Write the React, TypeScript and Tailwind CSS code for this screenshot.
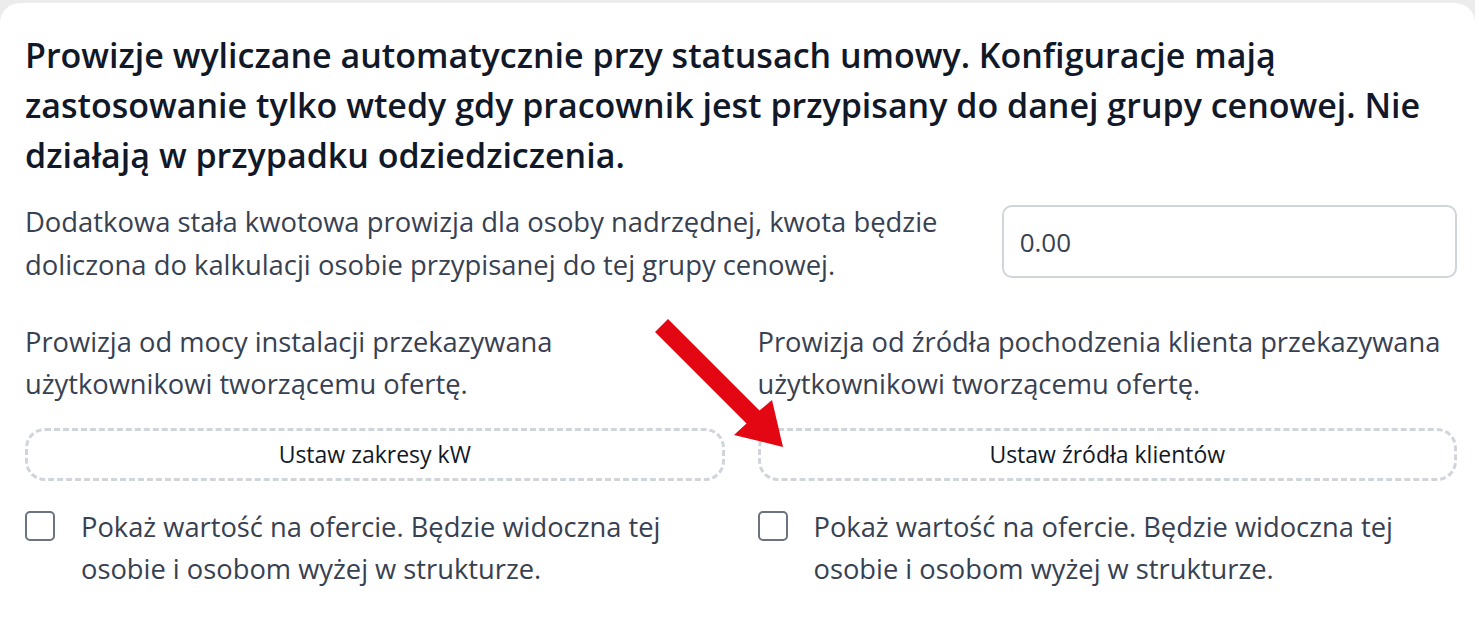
import React from "react";

const font = { fontFamily: '"Open Sans", "Noto Sans", sans-serif' };

// Checkbox row with the two-line label
const ShowOnOffer = () => (
  <label className="flex items-start gap-[26px] cursor-pointer">
    <span className="mt-[5px] w-[30px] h-[30px] shrink-0 rounded-[5px] border-2 border-[#6b7280] bg-white" />
    <span className="text-[27.3px] leading-[42px] text-[#374151]">
      Pokaż wartość na ofercie. Będzie widoczna tej osobie i osobom wyżej w strukturze.
    </span>
  </label>
);

const DashedButton = ({ children }: { children: React.ReactNode }) => (
  <button className="w-full h-[53px] rounded-[20px] border-[3px] border-dashed border-[#d1d5db] bg-white text-[23px] font-medium text-[#111827]">
    {children}
  </button>
);

export default function App() {
  return (
    <div className="min-h-screen bg-[#ececec] pt-[3px]" style={font}>
      <div className="relative min-h-[635px] bg-white rounded-t-[20px] pl-[25px] pr-[18px] pt-[27px]">
        <h2 className="text-[34px] leading-[50px] font-semibold text-[#111827]">
          Prowizje wyliczane automatycznie przy statusach umowy. Konfiguracje mają zastosowanie
          tylko wtedy gdy pracownik jest przypisany do danej grupy cenowej. Nie działają w
          przypadku odziedziczenia.
        </h2>

        <div className="grid grid-cols-3 gap-x-[33px] mt-[20px]">
          <p className="col-span-2 text-[27.4px] leading-[43px] text-[#374151]">
            Dodatkowa stała kwotowa prowizja dla osoby nadrzędnej, kwota będzie doliczona do
            kalkulacji osobie przypisanej do tej grupy cenowej.
          </p>
          <div className="pt-[5px]">
            <input
              type="text"
              defaultValue="0.00"
              className="w-full h-[73px] rounded-[10px] border-2 border-[#d1d5db] px-[16px] text-[26px] text-[#374151] outline-none"
              style={font}
            />
          </div>
        </div>

        <div className="grid grid-cols-2 gap-x-[33px] mt-[35px]">
          <div className="flex flex-col">
            <p className="text-[27.3px] leading-[42px] text-[#374151] pr-[100px]">
              Prowizja od mocy instalacji przekazywana użytkownikowi tworzącemu ofertę.
            </p>
            <div className="mt-[23px]">
              <DashedButton>Ustaw zakresy kW</DashedButton>
            </div>
            <div className="mt-[25px]">
              <ShowOnOffer />
            </div>
          </div>
          <div className="flex flex-col">
            <p className="text-[27.3px] leading-[42px] text-[#374151]">
              Prowizja od źródła pochodzenia klienta przekazywana użytkownikowi tworzącemu ofertę.
            </p>
            <div className="mt-[23px]">
              <DashedButton>Ustaw źródła klientów</DashedButton>
            </div>
            <div className="mt-[25px]">
              <ShowOnOffer />
            </div>
          </div>
        </div>

        {/* annotation arrow drawn over the form */}
        <svg
          className="absolute left-0 top-[-3px] pointer-events-none"
          width="1475"
          height="638"
          viewBox="0 0 1475 638"
        >
          <polygon
            points="655,332 668,319 759.5,410.5 772,400 783,447 734,435 746.5,423.5"
            fill="#e30613"
          />
        </svg>
      </div>
    </div>
  );
}
